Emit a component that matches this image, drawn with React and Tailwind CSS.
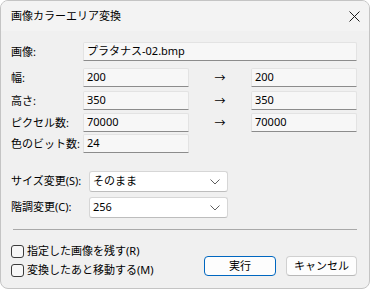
import React from "react";

const font = { fontFamily: '"Noto Sans", "Noto Sans CJK JP", sans-serif' };

const Field = ({ value, className = "" }) => (
  <div
    className={`h-[19px] flex items-center pl-[3px] bg-[#f7f7f7] border border-[#e3e3e3] border-b-[#8c8c8c] rounded-t-[2px] text-[11px] text-black ${className}`}
  >
    {value}
  </div>
);

const Label = ({ children, className = "" }) => (
  <div className={`w-[72px] text-[11px] text-black leading-none ${className}`}>{children}</div>
);

const Arrow = () => (
  <div className="w-[62px] flex justify-center pt-[2px] text-[11px] text-black">→</div>
);

const Chevron = () => (
  <svg width="10" height="6" viewBox="0 0 10 6" className="mr-[7px]">
    <path d="M0.5 0.5 L5 5 L9.5 0.5" fill="none" stroke="#5f5f5f" strokeWidth="1" />
  </svg>
);

const Select = ({ value }) => (
  <div className="w-[139px] h-[21px] flex items-center justify-between pl-[3px] bg-white border border-[#d6d6d6] border-b-[#bdbdbd] rounded-[3px] text-[11px] text-black">
    <span>{value}</span>
    <Chevron />
  </div>
);

const Check = ({ label }) => (
  <div className="flex items-center h-[19px] gap-[3px]">
    <div className="w-[13px] h-[13px] border border-[#3b3b3b] rounded-[3px] bg-[#f7f7f7]" />
    <span className="text-[11px] text-black">{label}</span>
  </div>
);

export default function App() {
  return (
    <div className="w-[370px] h-[289px] bg-white" style={font}>
      <div className="w-full h-full flex flex-col rounded-[8px] border border-[#c4c4c4] bg-[#f0f0f0] overflow-hidden">
        <div className="h-[30px] flex items-center justify-between pl-[10px] pr-[9px] bg-[#f3f3f3]">
          <span className="text-[11px] text-black">画像カラーエリア変換</span>
          <svg width="11" height="11" viewBox="0 0 11 11">
            <path d="M0.5 0.5 L10.5 10.5 M10.5 0.5 L0.5 10.5" stroke="#1c1c1c" strokeWidth="1" />
          </svg>
        </div>

        <div className="flex flex-col pl-[10px] pr-[11px]">
          <div className="flex items-center mt-[11px]">
            <Label>画像:</Label>
            <Field value="プラタナス-02.bmp" className="w-[274px]" />
          </div>
          <div className="flex items-center mt-[7px]">
            <Label>幅:</Label>
            <Field value="200" className="w-[106px]" />
            <Arrow />
            <Field value="200" className="w-[106px]" />
          </div>
          <div className="flex items-center mt-[4px]">
            <Label>高さ:</Label>
            <Field value="350" className="w-[106px]" />
            <Arrow />
            <Field value="350" className="w-[106px]" />
          </div>
          <div className="flex items-center mt-[3px]">
            <Label>ピクセル数:</Label>
            <Field value="70000" className="w-[106px]" />
            <Arrow />
            <Field value="70000" className="w-[106px]" />
          </div>
          <div className="flex items-center mt-[2px]">
            <Label>色のビット数:</Label>
            <Field value="24" className="w-[106px]" />
          </div>

          <div className="flex items-center mt-[18px]">
            <div className="w-[78px] text-[11px] text-black">サイズ変更(S):</div>
            <Select value="そのまま" />
          </div>
          <div className="flex items-center mt-[5px]">
            <div className="w-[78px] text-[11px] text-black">階調変更(C):</div>
            <Select value="256" />
          </div>

          <div className="h-px bg-[#a9a9a9] mt-[11px] ml-[2px] mr-[1px]" />

          <div className="flex items-end justify-between mt-[12px]">
            <div className="flex flex-col">
              <Check label="指定した画像を残す(R)" />
              <Check label="変換したあと移動する(M)" />
            </div>
            <div className="flex gap-[10px] mb-[4px] mr-[1px]">
              <button className="w-[72px] h-[20px] flex items-center justify-center bg-[#fdfdfd] border border-[#0067c0] rounded-[4px] text-[11px] text-black">
                実行
              </button>
              <button className="w-[71px] h-[20px] flex items-center justify-center bg-[#fdfdfd] border border-[#d0d0d0] border-b-[#b8b8b8] rounded-[4px] text-[11px] text-black">
                キャンセル
              </button>
            </div>
          </div>
        </div>
      </div>
    </div>
  );
}
